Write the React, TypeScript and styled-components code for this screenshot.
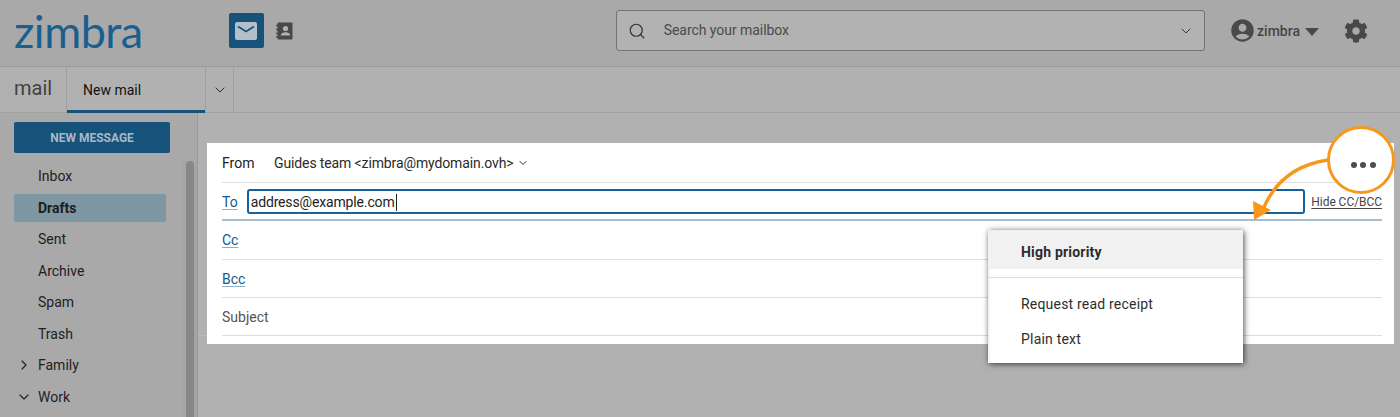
import React from 'react';
import styled, { createGlobalStyle } from 'styled-components';
import { ChevronDown, ChevronRight, Search } from 'lucide-react';
import { FaCog } from 'react-icons/fa';
import { MdAccountCircle } from 'react-icons/md';

const GlobalStyle = createGlobalStyle`
  html, body {
    margin: 0;
    padding: 0;
    background: #b1b1b1;
    font-family: Roboto, "Liberation Sans", sans-serif;
  }
  * {
    box-sizing: border-box;
  }
`;

const Page = styled.div`
  position: relative;
  display: flex;
  flex-direction: column;
  width: 1400px;
  height: 417px;
  overflow: hidden;
  background: #b1b1b1;
`;

const Header = styled.header`
  display: flex;
  align-items: center;
  flex: 0 0 67px;
  padding: 0 32px 5px 14px;
  background: #a9a9a9;
  border-bottom: 1px solid #9c9c9c;
  box-shadow: 0 1px 2px rgba(0, 0, 0, 0.12);
`;

const Logo = styled.div`
  width: 215px;
  font-family: Lato, sans-serif;
  font-size: 45px;
  line-height: 40px;
  letter-spacing: -0.5px;
  color: #1b5f8f;
`;

const AppIconActive = styled.div`
  display: flex;
  align-items: center;
  justify-content: center;
  width: 35px;
  height: 35px;
  border-radius: 2px;
  background: #17527b;
`;

const AppIcon = styled.div`
  display: flex;
  align-items: center;
  margin-left: 12px;
`;

const SearchBox = styled.div`
  display: flex;
  align-items: center;
  width: 590px;
  height: 41px;
  margin-left: 323px;
  padding: 0 10px 0 11px;
  background: #b2b2b2;
  border: 1px solid #747474;
  border-radius: 3px;
  color: #333;
`;

const SearchText = styled.span`
  flex: 1;
  margin: 0 0 2px 18px;
  font-size: 14px;
  letter-spacing: -0.05px;
  color: #4a4a4a;
`;

const UserMenu = styled.div`
  display: flex;
  align-items: center;
  margin-left: 26px;
  color: #4a4a4a;
`;

const UserName = styled.span`
  margin-left: 3px;
  font-size: 14px;
  font-weight: 500;
  color: #454545;
`;

const Caret = styled.span`
  width: 0;
  height: 0;
  margin: 2px 0 0 5px;
  border-left: 7px solid transparent;
  border-right: 7px solid transparent;
  border-top: 8px solid #484848;
`;

const Gear = styled.div`
  display: flex;
  margin-left: 25px;
  color: #484848;
`;

const TabBar = styled.div`
  display: flex;
  flex: 0 0 46px;
  background: #b1b1b1;
  border-bottom: 1px solid #a0a0a0;
`;

const AppName = styled.div`
  display: flex;
  align-items: center;
  width: 67px;
  padding: 0 0 3px 14px;
  font-size: 20px;
  color: #414141;
  border-right: 1px solid #a0a0a0;
`;

const Tab = styled.div`
  display: flex;
  align-items: center;
  width: 138px;
  padding: 3px 0 0 16px;
  font-size: 14px;
  color: #111;
  border-bottom: 3px solid #17527b;
  margin-bottom: -1px;
`;

const TabToggle = styled.div`
  display: flex;
  align-items: center;
  justify-content: center;
  width: 29px;
  color: #222;
  border-left: 1px solid #a0a0a0;
  border-right: 1px solid #a0a0a0;
`;

const Body = styled.div`
  display: flex;
  flex: 1;
  min-height: 0;
`;

const Sidebar = styled.aside`
  position: relative;
  flex: 0 0 198px;
  padding: 9px 0 0 14px;
  background: #a9a9a9;
  border-right: 1px solid #9b9b9b;
`;

const NewMessage = styled.div`
  display: flex;
  align-items: center;
  justify-content: center;
  width: 156px;
  height: 31px;
  margin-bottom: 9.5px;
  border-radius: 2px;
  background: #17527b;
  color: #a8b9c6;
  font-size: 12px;
  font-weight: 700;
`;

const Folder = styled.div<{ $active?: boolean }>`
  position: relative;
  display: flex;
  align-items: center;
  width: 152px;
  height: 27.5px;
  margin-bottom: 4px;
  padding-left: 24px;
  border-radius: 2px;
  background: ${({ $active }) => ($active ? '#7f96a3' : 'transparent')};
  color: #1d1d1d;
  font-size: 14px;
  font-weight: ${({ $active }) => ($active ? 700 : 400)};
`;

const FolderToggle = styled.span`
  position: absolute;
  left: 2px;
  display: flex;
  color: #1d1d1d;
`;

const ScrollTrack = styled.div`
  position: absolute;
  top: 48px;
  left: 183px;
  bottom: 0;
  width: 14px;
  background: #a5a5a5;
`;

const ScrollThumb = styled.div`
  width: 8px;
  height: 100%;
  margin-left: 3px;
  border-radius: 4px 4px 0 0;
  background: #878787;
`;

const Main = styled.main`
  flex: 1;
  padding: 30px 6px 0 9px;
`;

const Card = styled.section`
  height: 201px;
  padding: 0 12px 0 15px;
  background: #fff;
`;

const Row = styled.div<{ $height: number; $focused?: boolean }>`
  display: flex;
  align-items: center;
  height: ${({ $height }) => $height}px;
  padding-top: ${({ $focused }) => ($focused ? 1 : 0)}px;
  border-bottom: ${({ $focused }) => ($focused ? '2px solid #a3bdd2' : '1px solid #dedede')};
  font-size: 14px;
  color: #222;
`;

const SubjectRow = styled(Row)`
  position: relative;
  padding-top: 1px;
  color: #555;

  &::before {
    content: '';
    position: absolute;
    left: -24px;
    bottom: -1px;
    width: 9px;
    height: 1px;
    background: #bdbdbd;
  }
`;

const FromLabel = styled.span`
  width: 52px;
`;

const FromValue = styled.span`
  display: flex;
  align-items: center;
  gap: 4px;
  letter-spacing: -0.12px;
  color: #2a2a2a;
`;

const AddressLink = styled.a`
  color: #17588a;
  text-decoration: underline;
  text-decoration-color: #8fb0c9;
  text-underline-offset: 2px;
`;

const ToInput = styled.div`
  display: flex;
  align-items: center;
  flex: 1;
  height: 25px;
  margin: 0 6px 0 9px;
  padding: 1px 0 0 2px;
  border: 2px solid #17609a;
  border-radius: 3px;
  font-size: 14px;
  letter-spacing: -0.15px;
  color: #222;
`;

const Cursor = styled.span`
  width: 1px;
  height: 17px;
  margin-left: 1px;
  background: #222;
`;

const HideLink = styled.a`
  white-space: nowrap;
  font-size: 12px;
  letter-spacing: -0.05px;
  color: #444;
  text-decoration: underline;
  text-underline-offset: 2px;
`;

const OptionsMenu = styled.div`
  position: absolute;
  top: 230px;
  left: 988px;
  width: 255px;
  height: 133px;
  background: #fff;
  box-shadow: 1px 1px 6px rgba(0, 0, 0, 0.7), inset 3px 0 3px -2px rgba(0, 0, 0, 0.08);
  font-size: 14px;
  color: #2d2d2d;
`;

const MenuItem = styled.div<{ $selected?: boolean; $height: number }>`
  display: flex;
  align-items: center;
  height: ${({ $height }) => $height}px;
  padding: ${({ $selected }) => ($selected ? '4px' : '0')} 0 0 33px;
  letter-spacing: 0.2px;
  background: ${({ $selected }) => ($selected ? '#f1f1f1' : 'transparent')};
  font-weight: ${({ $selected }) => ($selected ? 700 : 400)};
`;

const MenuDivider = styled.div`
  height: 1px;
  margin: 8px 0 8px;
  background: #dcdcdc;
`;

const Callout = styled.div`
  position: absolute;
  top: 126px;
  left: 1327px;
  display: flex;
  align-items: center;
  justify-content: center;
  gap: 3.5px;
  width: 68px;
  height: 68px;
  padding: 9px 0 0 4px;
  border: 3px solid #f7981d;
  border-radius: 50%;
  background: #fff;
`;

const Dot = styled.span`
  width: 6px;
  height: 6px;
  border-radius: 50%;
  background: #4d4d4d;
`;

const CalloutArrow = styled.svg`
  position: absolute;
  top: 150px;
  left: 1245px;
`;

const MailIcon = () => (
  <svg width="24" height="20" viewBox="0 0 24 20">
    <rect x="1" y="1" width="22" height="18" rx="2" fill="#b3c0c9" />
    <path d="M4 5.5l8 5 8-5" fill="none" stroke="#17527b" strokeWidth="1.6" />
  </svg>
);

const ContactsIcon = () => (
  <svg width="17" height="18" viewBox="0 0 17 18">
    <rect x="1.5" y="0.5" width="15" height="17" rx="1" fill="#484848" />
    <path d="M0 3.5h3M0 7.5h3M0 11.5h3M0 15h3" stroke="#484848" strokeWidth="1.4" />
    <circle cx="9.5" cy="6.5" r="2.6" fill="#b0b0b0" />
    <path d="M4.8 13.5c0-2.3 2.6-3.2 4.7-3.2s4.7.9 4.7 3.2z" fill="#b0b0b0" />
  </svg>
);

const folders = ['Inbox', 'Drafts', 'Sent', 'Archive', 'Spam', 'Trash'];

export default function App() {
  return (
    <Page>
      <GlobalStyle />
      <Header>
        <Logo>zimbra</Logo>
        <AppIconActive>
          <MailIcon />
        </AppIconActive>
        <AppIcon>
          <ContactsIcon />
        </AppIcon>
        <SearchBox>
          <Search size={18} strokeWidth={1.6} />
          <SearchText>Search your mailbox</SearchText>
          <ChevronDown size={16} strokeWidth={1.4} />
        </SearchBox>
        <UserMenu>
          <MdAccountCircle size={27} style={{ margin: '0 -2px' }} />
          <UserName>zimbra</UserName>
          <Caret />
        </UserMenu>
        <Gear>
          <FaCog size={24} />
        </Gear>
      </Header>
      <TabBar>
        <AppName>mail</AppName>
        <Tab>New mail</Tab>
        <TabToggle>
          <ChevronDown size={16} strokeWidth={1.4} />
        </TabToggle>
      </TabBar>
      <Body>
        <Sidebar>
          <NewMessage>NEW MESSAGE</NewMessage>
          {folders.map((name) => (
            <Folder key={name} $active={name === 'Drafts'}>
              {name}
            </Folder>
          ))}
          <Folder>
            <FolderToggle>
              <ChevronRight size={16} strokeWidth={1.6} />
            </FolderToggle>
            Family
          </Folder>
          <Folder>
            <FolderToggle>
              <ChevronDown size={16} strokeWidth={1.6} />
            </FolderToggle>
            Work
          </Folder>
          <ScrollTrack>
            <ScrollThumb />
          </ScrollTrack>
        </Sidebar>
        <Main>
          <Card>
            <Row $height={40}>
              <FromLabel>From</FromLabel>
              <FromValue>
                Guides team &lt;zimbra@mydomain.ovh&gt;
                <ChevronDown size={12} strokeWidth={2} />
              </FromValue>
            </Row>
            <Row $height={38} $focused>
              <AddressLink>To</AddressLink>
              <ToInput>
                address@example.com
                <Cursor />
              </ToInput>
              <HideLink>Hide CC/BCC</HideLink>
            </Row>
            <Row $height={39}>
              <AddressLink>Cc</AddressLink>
            </Row>
            <Row $height={38}>
              <AddressLink>Bcc</AddressLink>
            </Row>
            <SubjectRow $height={38}>Subject</SubjectRow>
          </Card>
        </Main>
      </Body>
      <OptionsMenu>
        <MenuItem $selected $height={39}>
          High priority
        </MenuItem>
        <MenuDivider />
        <MenuItem $height={35}>Request read receipt</MenuItem>
        <MenuItem $height={35}>Plain text</MenuItem>
      </OptionsMenu>
      <CalloutArrow width="90" height="75" viewBox="0 0 90 75">
        <path d="M83 10C55 14 32 28 19 57" fill="none" stroke="#f7981d" strokeWidth="3.5" />
        <path d="M9 70L8 51L26 60z" fill="#f7981d" />
      </CalloutArrow>
      <Callout>
        <Dot />
        <Dot />
        <Dot />
      </Callout>
    </Page>
  );
}
